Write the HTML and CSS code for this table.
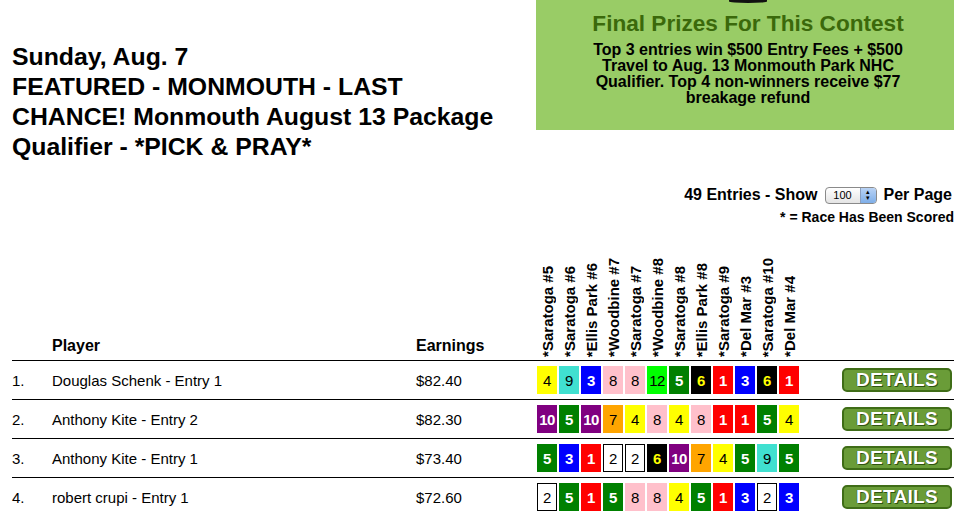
FILE: index.html
```html
<!DOCTYPE html>
<html>
<head>
<meta charset="utf-8">
<link rel="stylesheet" href="styles.css">
</head>
<body>
<div class="page">
  <div class="top">
    <h1 class="title">Sunday, Aug. 7<br>FEATURED - MONMOUTH - LAST CHANCE! Monmouth August 13 Package Qualifier - *PICK &amp; PRAY*</h1>
    <div class="prize">
      <div class="logo-tip"></div>
      <h2 class="prize-title">Final Prizes For This Contest</h2>
      <p class="prize-text">Top 3 entries win $500 Entry Fees + $500<br>Travel to Aug. 13 Monmouth Park NHC<br>Qualifier. Top 4 non-winners receive $77<br>breakage refund</p>
    </div>
  </div>

  <div class="entries">49 Entries - Show <span class="select"><span class="sel-val">100</span><span class="sel-arrow"><span>&#9652;</span><span>&#9662;</span></span></span> Per Page</div>
  <div class="scored">* = Race Has Been Scored</div>

  <div class="table">
    <div class="row head">
      <div></div>
      <div class="hcell">Player</div>
      <div class="hcell">Earnings</div>
      <div class="races">
        <span class="race">*Saratoga #5</span>
        <span class="race">*Saratoga #6</span>
        <span class="race">*Ellis Park #6</span>
        <span class="race">*Woodbine #7</span>
        <span class="race">*Saratoga #7</span>
        <span class="race">*Woodbine #8</span>
        <span class="race">*Saratoga #8</span>
        <span class="race">*Ellis Park #8</span>
        <span class="race">*Saratoga #9</span>
        <span class="race">*Del Mar #3</span>
        <span class="race">*Saratoga #10</span>
        <span class="race">*Del Mar #4</span>
      </div>
      <div></div>
    </div>

    <div class="row">
      <div>1.</div>
      <div>Douglas Schenk - Entry 1</div>
      <div>$82.40</div>
      <div class="picks">
        <span class="p c4">4</span><span class="p c9">9</span><span class="p c3">3</span><span class="p c8">8</span><span class="p c8">8</span><span class="p c12">12</span><span class="p c5">5</span><span class="p c6">6</span><span class="p c1">1</span><span class="p c3">3</span><span class="p c6">6</span><span class="p c1">1</span>
      </div>
      <div><span class="details">DETAILS</span></div>
    </div>

    <div class="row">
      <div>2.</div>
      <div>Anthony Kite - Entry 2</div>
      <div>$82.30</div>
      <div class="picks">
        <span class="p c10">10</span><span class="p c5">5</span><span class="p c10">10</span><span class="p c7">7</span><span class="p c4">4</span><span class="p c8">8</span><span class="p c4">4</span><span class="p c8">8</span><span class="p c1">1</span><span class="p c1">1</span><span class="p c5">5</span><span class="p c4">4</span>
      </div>
      <div><span class="details">DETAILS</span></div>
    </div>

    <div class="row">
      <div>3.</div>
      <div>Anthony Kite - Entry 1</div>
      <div>$73.40</div>
      <div class="picks">
        <span class="p c5">5</span><span class="p c3">3</span><span class="p c1">1</span><span class="p c2">2</span><span class="p c2">2</span><span class="p c6">6</span><span class="p c10">10</span><span class="p c7">7</span><span class="p c4">4</span><span class="p c5">5</span><span class="p c9">9</span><span class="p c5">5</span>
      </div>
      <div><span class="details">DETAILS</span></div>
    </div>

    <div class="row">
      <div>4.</div>
      <div>robert crupi - Entry 1</div>
      <div>$72.60</div>
      <div class="picks">
        <span class="p c2">2</span><span class="p c5">5</span><span class="p c1">1</span><span class="p c5">5</span><span class="p c8">8</span><span class="p c8">8</span><span class="p c4">4</span><span class="p c5">5</span><span class="p c1">1</span><span class="p c3">3</span><span class="p c2">2</span><span class="p c3">3</span>
      </div>
      <div><span class="details">DETAILS</span></div>
    </div>
  </div>
</div>
</body>
</html>
```

FILE: styles.css
```css
html, body {
  margin: 0;
  padding: 0;
  overflow: hidden;
  background: #fff;
}
body {
  font-family: "Liberation Sans", Arial, sans-serif;
  color: #000;
}
.page {
  margin-left: 12px;
  width: 946px;
}
.top {
  display: flex;
  align-items: flex-start;
  justify-content: space-between;
}
.title {
  margin: 42px 0 0 0;
  width: 505px;
  font-size: 24.8px;
  line-height: 30px;
  font-weight: bold;
}
.prize {
  width: 424px;
  height: 130px;
  margin-right: -2px;
  background: #99cc66;
  text-align: center;
}
.logo-tip {
  width: 38px;
  height: 3px;
  margin: 0 auto;
  background: #111;
  border-radius: 0 0 50% 50%;
}
.prize-title {
  margin: 8px 0 0 0;
  font-size: 22.6px;
  line-height: 26px;
  font-weight: bold;
  color: #3b690b;
}
.prize-text {
  margin: 5px 0 0 0;
  font-size: 16px;
  line-height: 16px;
  font-weight: bold;
}
.entries {
  margin-top: 23px;
  display: flex;
  justify-content: flex-end;
  align-items: center;
  gap: 7px;
  font-size: 16px;
  line-height: 20px;
  font-weight: bold;
  padding-right: 6px;
}
.select {
  display: inline-flex;
  width: 50px;
  height: 15px;
  border: 1px solid #8a8a8a;
  border-radius: 4px;
  background: linear-gradient(#ffffff, #e4e4e4);
  overflow: hidden;
  font-weight: normal;
  font-size: 11px;
  line-height: 15px;
}
.sel-val {
  flex: 1;
  text-align: center;
}
.sel-arrow {
  width: 15px;
  display: flex;
  flex-direction: column;
  align-items: center;
  justify-content: center;
  background: linear-gradient(#b9d3f5, #7eaee8);
  border-left: 1px solid #8a9fc0;
  font-size: 7px;
  line-height: 6px;
}
.scored {
  text-align: right;
  font-size: 14px;
  line-height: 16px;
  font-weight: bold;
  margin-top: 4px;
  margin-right: 4px;
}
.table {
  margin-top: 23px;
}
.row {
  display: grid;
  grid-template-columns: 40px 364px 121px 305px 1fr;
  align-items: center;
  height: 38px;
  border-bottom: 1px solid #000;
  font-size: 15px;
}
.row.head {
  height: 112px;
  align-items: end;
}
.hcell {
  font-size: 16px;
  font-weight: bold;
  line-height: 18px;
  padding-bottom: 5px;
}
.races {
  display: flex;
  align-items: flex-end;
  padding-bottom: 3px;
}
.race {
  width: 22px;
  writing-mode: vertical-rl;
  transform: rotate(180deg);
  font-size: 15px;
  font-weight: bold;
  line-height: 22px;
  white-space: nowrap;
}
.picks {
  display: flex;
  gap: 2px;
}
.p {
  box-sizing: border-box;
  width: 20px;
  height: 28px;
  display: flex;
  align-items: center;
  justify-content: center;
  font-size: 15px;
  letter-spacing: -0.5px;
}
.c1 { background: #ff0000; color: #fff; font-weight: bold; }
.c2 { background: #fff; color: #000; border: 1px solid #000; }
.c3 { background: #0000ff; color: #fff; font-weight: bold; }
.c4 { background: #ffff00; color: #000; }
.c5 { background: #008000; color: #fff; font-weight: bold; }
.c6 { background: #000; color: #ffff00; font-weight: bold; }
.c7 { background: #ffa500; color: #000; }
.c8 { background: #ffc0cb; color: #000; }
.c9 { background: #40e0d0; color: #000; }
.c10 { background: #800080; color: #fff; font-weight: bold; }
.c12 { background: #00ff00; color: #000; }
.details {
  box-sizing: border-box;
  display: flex;
  align-items: center;
  justify-content: center;
  width: 110px;
  height: 24px;
  background: #6a9c38;
  border: 2px solid #3f6d17;
  border-radius: 5px;
  color: #fff;
  font-size: 19px;
  font-weight: bold;
  letter-spacing: 0.3px;
  text-shadow: 1px 1px 0 #2f5410, -0.5px -0.5px 0 #2f5410;
}
```
